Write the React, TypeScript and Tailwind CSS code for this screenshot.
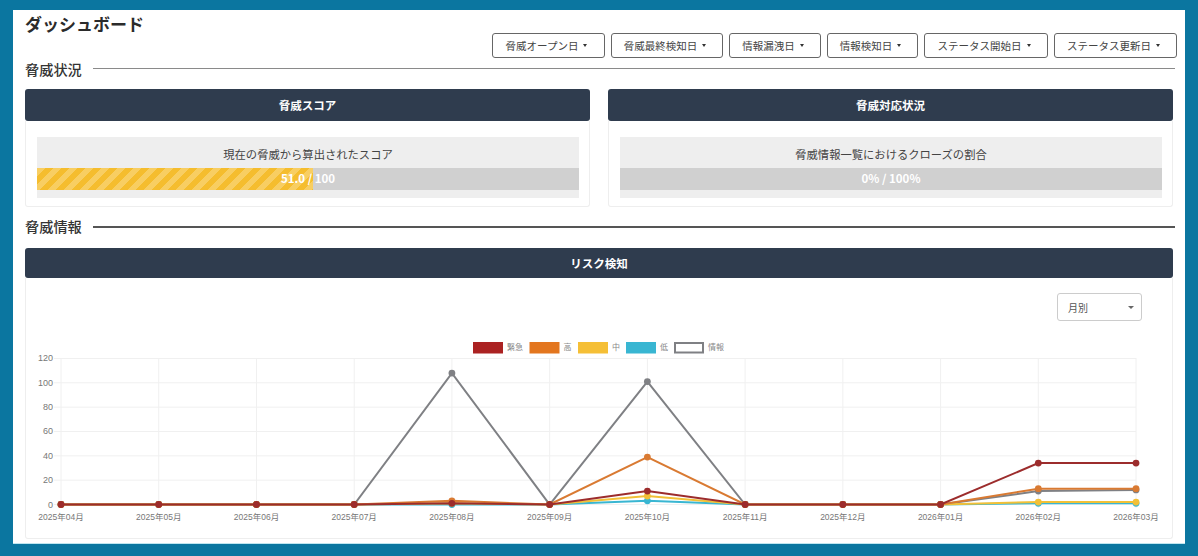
const font = "[font-family:'Noto_Sans_CJK_JP','Noto_Sans',sans-serif]";

const filters = [
  { label: "脅威オープン日", width: "w-[113px]" },
  { label: "脅威最終検知日", width: "w-[112px]" },
  { label: "情報漏洩日", width: "w-[92px]" },
  { label: "情報検知日", width: "w-[91px]" },
  { label: "ステータス開始日", width: "w-[124px]" },
  { label: "ステータス更新日", width: "w-[123px]" },
];

const months = [
  "2025年04月", "2025年05月", "2025年06月", "2025年07月", "2025年08月", "2025年09月",
  "2025年10月", "2025年11月", "2025年12月", "2026年01月", "2026年02月", "2026年03月",
];

// drawn in this order, so the first in the legend ends up on top
const series = [
  { color: "#7f8084", data: [0, 0, 0, 0, 108, 0, 101, 0, 0, 0, 11, 12] },
  { color: "#39b6d2", data: [0, 0, 0, 0, 0, 0, 3, 0, 0, 0, 1, 1] },
  { color: "#f2c037", data: [0, 0, 0, 0, 1, 0, 7, 0, 0, 0, 2, 2] },
  { color: "#d97a32", data: [0, 0, 0, 0, 3, 0, 39, 0, 0, 0, 13, 13] },
  { color: "#9c2c2c", data: [0, 0, 0, 0, 1, 0, 11, 0, 0, 0, 34, 34] },
];

const legend = [
  { label: "緊急", x: 473, fill: "#ab2222", stroke: "#ab2222" },
  { label: "高", x: 529.5, fill: "#e3761f", stroke: "#e3761f" },
  { label: "中", x: 578, fill: "#f5bf36", stroke: "#f5bf36" },
  { label: "低", x: 626, fill: "#39b6d2", stroke: "#39b6d2" },
  { label: "情報", x: 674, fill: "#ffffff", stroke: "#7f8084" },
];

const px = (i: number) => 61 + i * 97.73;
const py = (v: number) => 504.5 - v * 1.217;

function Chart() {
  return (
    <svg width="1146" height="195" viewBox="26 335 1146 195" className="block">
      {[0, 20, 40, 60, 80, 100, 120].map((v) => (
        <g key={v}>
          <line x1="54" x2="1136" y1={py(v)} y2={py(v)} stroke="#f0f0f0" />
          <text x="53" y={py(v) + 3} textAnchor="end" fontSize="9" fill="#777777" fontFamily="'Liberation Sans', sans-serif">{v}</text>
        </g>
      ))}
      {months.map((m, i) => (
        <g key={m}>
          <line x1={px(i)} x2={px(i)} y1="358" y2="508" stroke="#f0f0f0" />
          <text x={px(i)} y="519.5" textAnchor="middle" fontSize="8.5" fill="#777777" fontFamily="'Liberation Sans', 'Noto Sans CJK JP', sans-serif">{m}</text>
        </g>
      ))}
      {legend.map((l) => (
        <g key={l.label}>
          <rect x={l.x + 1} y="343" width="28" height="9.5" fill={l.fill} stroke={l.stroke} strokeWidth="2" />
          <text x={l.x + 34} y="350" fontSize="8" fill="#888888" fontFamily="'Noto Sans CJK JP', sans-serif">{l.label}</text>
        </g>
      ))}
      {series.map((s) => (
        <g key={s.color}>
          <polyline
            points={s.data.map((v, i) => `${px(i)},${py(v)}`).join(" ")}
            fill="none"
            stroke={s.color}
            strokeWidth="2"
          />
          {s.data.map((v, i) => (
            <circle key={i} cx={px(i)} cy={py(v)} r="3.4" fill={s.color} />
          ))}
        </g>
      ))}
    </svg>
  );
}

function SectionTitle({ title, line }: { title: string; line: string }) {
  return (
    <div className="flex items-center h-[20px] -mr-[2px]">
      <h2 className="text-[14.2px] leading-[20px] pb-[2px] font-medium text-[#333] w-[68px] shrink-0">{title}</h2>
      <div className={`flex-1 ${line}`} />
    </div>
  );
}

function ScoreCard({ title, label, value, fill }: { title: string; label: string; value: string; fill: boolean }) {
  return (
    <div className="rounded-[3px]">
      <div className="h-[32px] pt-[1px] rounded-[3px] bg-[#2f3c4e] text-white text-[11.5px] font-bold flex items-center justify-center">
        {title}
      </div>
      <div className="h-[86px] border border-t-0 border-[#eeeeee] rounded-b-[3px] pl-[11px] pr-[10px] pt-[16px]">
        <div className="h-[61px] bg-[#eeeeee]">
          <div className="h-[31px] pt-[3px] flex items-center justify-center text-[11.3px] text-[#444]">{label}</div>
          <div className="relative h-[22px] bg-[#d0d0d0] flex items-center justify-center">
            {fill && (
              <div className="absolute left-0 top-0 h-full w-[51%] bg-[#f5bd2e] bg-[linear-gradient(135deg,rgba(255,255,255,.25)_25%,transparent_25%,transparent_50%,rgba(255,255,255,.25)_50%,rgba(255,255,255,.25)_75%,transparent_75%,transparent)] bg-[length:16px_16px]" />
            )}
            <span className="relative text-white text-[11.5px] font-bold">{value}</span>
          </div>
        </div>
      </div>
    </div>
  );
}

export default function App() {
  return (
    <div className={`h-[556px] bg-[#0b76a0] px-[13px] pt-[10px] ${font}`}>
      <div className="h-[534px] bg-white px-[12px] pt-[4px] border-b border-[#bfe6f0]">
        <h1 className="text-[17px] leading-[20px] font-bold text-[#2b2b2b]">ダッシュボード</h1>
        <div className="-mt-[1px] -mr-[4px] flex justify-end gap-[6px]">
          {filters.map((f) => (
            <button
              key={f.label}
              className={`${f.width} h-[25px] pr-[4px] border border-[#666] rounded-[3px] bg-white text-[10.5px] text-[#444] flex items-center justify-center gap-[5px]`}
            >
              {f.label}
              <span className="border-x-[2.5px] border-t-[3px] border-x-transparent border-t-[#333]" />
            </button>
          ))}
        </div>
        <div className="mt-[2px]">
          <SectionTitle title="脅威状況" line="h-[1.5px] -mt-[3px] bg-[#8a8a8a]" />
        </div>
        <div className="mt-[9px] grid grid-cols-2 gap-[18px]">
          <ScoreCard title="脅威スコア" label="現在の脅威から算出されたスコア" value="51.0 / 100" fill />
          <ScoreCard title="脅威対応状況" label="脅威情報一覧におけるクローズの割合" value="0% / 100%" fill={false} />
        </div>
        <div className="mt-[10px]">
          <SectionTitle title="脅威情報" line="h-[2px] bg-[#555]" />
        </div>
        <div className="mt-[11px]">
          <div className="h-[30px] pt-[1px] rounded-[3px] bg-[#2f3c4e] text-white text-[11.5px] font-bold flex items-center justify-center">
            リスク検知
          </div>
          <div className="border border-t-0 border-[#eeeeee] rounded-b-[3px] pt-[15px] pb-[8px]">
            <div className="flex justify-end pr-[30px]">
              <div className="w-[85px] h-[28px] border border-[#ccc] rounded-[3px] pl-[10px] pr-[7px] flex items-center justify-between text-[10px] text-[#555]">
                月別
                <span className="border-x-[3px] border-t-[3px] border-x-transparent border-t-[#666]" />
              </div>
            </div>
            <div className="mt-[14px]">
              <Chart />
            </div>
          </div>
        </div>
      </div>
    </div>
  );
}
